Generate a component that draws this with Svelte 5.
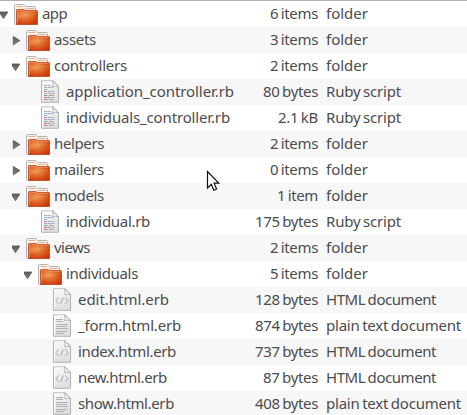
<script>
  // level, kind, name, name width, size, size width, type
  const rows = [
    [0, 'open', 'app', 25, '6 items', 48, 'folder'],
    [1, 'closed', 'assets', 42, '3 items', 48, 'folder'],
    [1, 'open', 'controllers', 73, '2 items', 48, 'folder'],
    [2, 'ruby', 'application_controller.rb', 168, '80 bytes', 55, 'Ruby script'],
    [2, 'ruby', 'individuals_controller.rb', 164, '2.1 kB', 40, 'Ruby script'],
    [1, 'closed', 'helpers', 50, '2 items', 48, 'folder'],
    [1, 'closed', 'mailers', 50, '0 items', 48, 'folder'],
    [1, 'open', 'models', 50, '1 item', 41, 'folder'],
    [2, 'ruby', 'individual.rb', 84, '175 bytes', 63, 'Ruby script'],
    [1, 'open', 'views', 36, '2 items', 48, 'folder'],
    [2, 'open', 'individuals', 72, '5 items', 48, 'folder'],
    [3, 'html', 'edit.html.erb', 91, '128 bytes', 63, 'HTML document'],
    [3, 'text', '_form.html.erb', 103, '874 bytes', 63, 'plain text document'],
    [3, 'html', 'index.html.erb', 98, '737 bytes', 63, 'HTML document'],
    [3, 'html', 'new.html.erb', 89, '87 bytes', 55, 'HTML document'],
    [3, 'text', 'show.html.erb', 96, '408 bytes', 63, 'plain text document']
  ];
  const typeWidth = { folder: 42, 'Ruby script': 75, 'HTML document': 110, 'plain text document': 135 };

  function fit(node, width) {
    const natural = node.getBoundingClientRect().width;
    node.style.letterSpacing = `${(width - natural) / node.textContent.length}px`;
  }

  const codeLines = [
    [6, 5.5, 7, '#7d9cba'], [6, 7.5, 9, '#6f94b8'], [6, 9.5, 4, '#8299ad'],
    [6, 11.5, 3, '#b54e80'], [10, 11.5, 6, '#6aa6a4'], [6, 13.5, 11, '#9a8cae'],
    [6, 15.5, 4, '#4b965f'], [11, 15.5, 5, '#c45d78'],
    [6, 17.5, 6, '#a95770'], [13, 17.5, 4, '#8a9fb5'], [6, 19.5, 4, '#bb5c5c'], [11, 19.5, 5, '#7b929f']
  ];
</script>

<svg class="defs" width="0" height="0">
  <defs>
    <radialGradient id="orange" cx=".4" cy=".36" r=".75">
      <stop offset="0" stop-color="#ee9450" />
      <stop offset=".45" stop-color="#e06a29" />
      <stop offset="1" stop-color="#c93208" />
    </radialGradient>
    <linearGradient id="gloss" x2="0" y2="1">
      <stop offset="0" stop-color="#fff" stop-opacity="0" />
      <stop offset="1" stop-color="#fff" stop-opacity=".16" />
    </linearGradient>
    <linearGradient id="paper" x2=".3" y2="1">
      <stop offset="0" stop-color="#fbfbfb" />
      <stop offset="1" stop-color="#dfdfdf" />
    </linearGradient>
    <linearGradient id="arrow" x2="0" y2="1">
      <stop offset="0" stop-color="#5c5b58" />
      <stop offset="1" stop-color="#858481" />
    </linearGradient>
  </defs>
</svg>

<main>
  {#each rows as [level, kind, name, nameWidth, size, sizeWidth, type]}
    <div class="row">
      <div class="name" style:padding-left="{level * 12}px">
        <svg class="expander" width="14" height="24" viewBox="0 0 14 24">
          {#if kind === 'open'}
            <path d="M-.8 10H7.8L3.5 16.7Z" fill="url(#arrow)" stroke="#55534f" stroke-width=".8" />
          {:else if kind === 'closed'}
            <path d="M1.3 8.4V16.8L7.8 12.6Z" fill="url(#arrow)" stroke="#55534f" stroke-width=".8" />
          {/if}
        </svg>
        <svg class="icon" width="24" height="24" viewBox="0 0 24 24">
          {#if kind === 'open' || kind === 'closed'}
            <path d="M.5 21.5V3.5Q.5 2.5 1.5 2.5H9.5L11.5 4.5H20.5Q21.5 4.5 21.5 6V22.5H1.5Q.5 22.5 .5 21.5Z" fill="#f4f3f0" stroke="#b4b3af" />
            <path d="M2.5 4.5H9M11.5 6.5H20" stroke="#f1ae83" />
            <path d="M2.5 7V20" stroke="#d7d4cf" />
            <path d="M3.5 7.5H9.8L11.8 8.5H22.8Q23.5 8.5 23.5 9.2V22.5H2.5V8.5Q2.5 7.5 3.5 7.5Z" fill="url(#orange)" stroke="#c5441c" stroke-width=".8" />
            <path d="M3.5 8.5H9.3L11.7 9.5H22.5V13Q12 13 3.5 17.5Z" fill="url(#gloss)" />
            <path d="M3.5 21V8.4H9.3L12 9.4H22.5" fill="none" stroke="#ec9a66" stroke-width=".7" />
          {:else}
            <path d="M3.5 .9H15.2L20.5 6.2V22.3H3.5Z" fill="url(#paper)" stroke="#b2b2b0" />
            <path d="M4.5 21.3V1.9H14.5" fill="none" stroke="#fff" stroke-opacity=".8" />
            <path d="M14.5 1Q15.5 3.9 14.7 6.7Q17.5 5.9 20.4 6.7Z" fill="#f8f8f8" stroke="#aaa" stroke-width=".8" />
            {#if kind === 'ruby'}
              <g opacity=".8">
                {#each codeLines as [x, y, w, color]}
                  <path d="M{x} {y}h{w}" stroke={color} stroke-width=".9" stroke-dasharray="3 .5" />
                {/each}
              </g>
            {:else if kind === 'html'}
              <path d="M8.8 9.4L5.8 12.6L8.8 15.8M15.2 9.4L18.2 12.6L15.2 15.8M13.2 9.4L10.8 15.8" fill="none" stroke="#a5a5a5" />
            {:else}
              <path d="M6 5.5h7M6 7.5h7M6 10.5h12M6 12.5h11M6 14.5h12M6 17.5h11M6 19.5h8" stroke="#b0b0b0" />
            {/if}
          {/if}
        </svg>
        <span class="label" use:fit={nameWidth}>{name}</span>
      </div>
      <div class="size"><span use:fit={sizeWidth}>{size}</span></div>
      <div class="type"><span use:fit={typeWidth[type]}>{type}</span></div>
    </div>
  {/each}

  <svg class="cursor" width="16" height="24" viewBox="0 0 16 24">
    <path d="M1.5 1.5V18L5.3 14.4L7.8 20.2L10.6 19L8.1 13.2H12.8Z" fill="#fff" stroke="#111" stroke-width="1.2" />
  </svg>
</main>

<style>
  :global(body) {
    margin: 0;
    overflow: hidden;
    background: #fff;
  }

  main {
    position: relative;
    box-sizing: border-box;
    width: 467px;
    height: 415px;
    overflow: hidden;
    border-top: 1px solid #b5b0aa;
    background: #fff;
    color: #4c4c4c;
    font: 15px/24px "Noto Sans", "Open Sans", sans-serif;
    word-spacing: -1px;
  }

  .defs {
    position: absolute;
  }

  .row {
    display: flex;
    height: 26px;
    white-space: pre;
  }

  .row:nth-child(even) {
    background: #f7f7f7;
  }

  .name {
    display: flex;
    box-sizing: border-box;
    width: 242px;
  }

  .expander,
  .icon {
    flex: none;
    margin-top: 1px;
  }

  .label {
    margin-left: 4px;
  }

  .size {
    width: 76px;
    text-align: right;
  }

  .type {
    margin-left: 8px;
  }

  .cursor {
    position: absolute;
    left: 206px;
    top: 169px;
  }
</style>
